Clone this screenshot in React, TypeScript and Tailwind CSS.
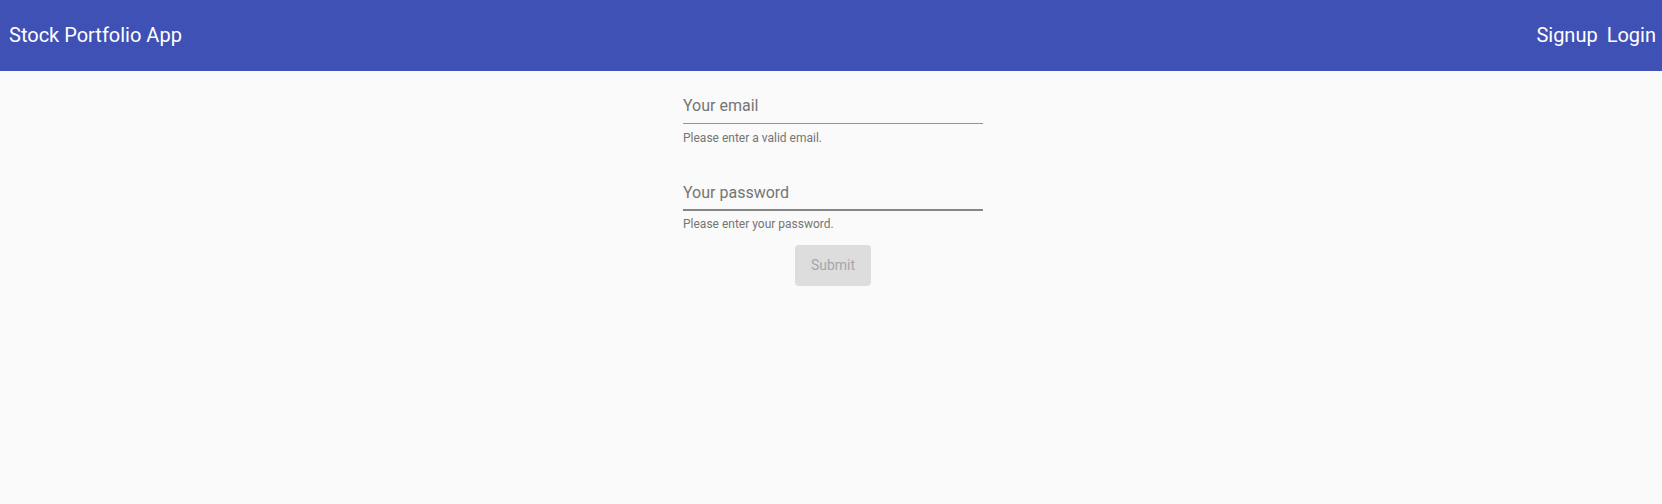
import React from "react";

export default function App() {
  return (
    <div className="min-h-[504px] bg-[#fafafa] font-['Roboto',sans-serif]">
      <header className="h-[71px] bg-[#3f51b5] flex items-center justify-between pl-[9px] pr-[6px] text-white">
        <div className="text-[20px] leading-[24px] -translate-y-[1px]">Stock Portfolio App</div>
        <nav className="flex items-center gap-[9px] text-[20px] leading-[24px] -translate-y-[1px]">
          <span>Signup</span>
          <span>Login</span>
        </nav>
      </header>
      <main className="flex justify-center pl-[4px]">
        <form className="w-[300px] flex flex-col pt-[25px]">
          <div className="border-b border-[#949494] pb-[7px]">
            <div className="text-[16px] leading-[20px] text-[#757575]">Your email</div>
          </div>
          <div className="mt-[6px] text-[12px] leading-[16px] text-[#757575]">Please enter a valid email.</div>
          <div className="mt-[37px] border-b-2 border-[#858585] pb-[6px]">
            <div className="text-[16px] leading-[20px] text-[#757575]">Your password</div>
          </div>
          <div className="mt-[5px] text-[12px] leading-[16px] text-[#757575]">Please enter your password.</div>
          <div className="flex justify-center mt-[13px]">
            <button type="button" disabled className="w-[76px] h-[41px] rounded-[4px] bg-[#dddddd] text-[14px] text-[#a6a6a6]">
              Submit
            </button>
          </div>
        </form>
      </main>
    </div>
  );
}
